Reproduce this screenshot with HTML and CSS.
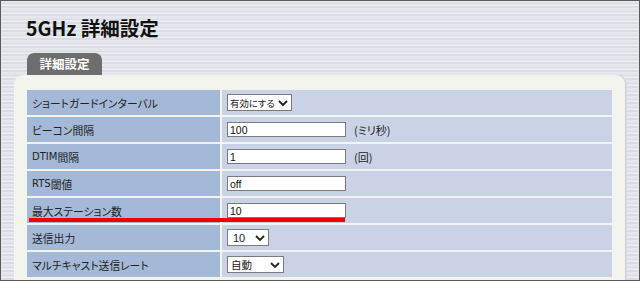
FILE: index.html
```html
<!DOCTYPE html>
<html lang="ja">
<head>
<meta charset="utf-8">
<title>5GHz 詳細設定</title>
<link rel="stylesheet" href="styles.css">
</head>
<body>
<div class="frame">
  <h1 class="title">5GHz 詳細設定</h1>
  <div class="tab">詳細設定</div>
  <div class="panel">
    <div class="settings">
      <div class="label">ショートガードインターバル</div>
      <div class="value">
        <span class="select select-wide"><span>有効にする</span><svg class="chev" viewBox="0 0 10 6" width="10" height="6"><path d="M1 1 L5 5 L9 1" fill="none" stroke="#222" stroke-width="1.8"/></svg></span>
      </div>
      <div class="label">ビーコン間隔</div>
      <div class="value"><input class="text" type="text" value="100"><span class="unit">(ミリ秒)</span></div>
      <div class="label"><span class="latin">DTIM</span>間隔</div>
      <div class="value"><input class="text" type="text" value="1"><span class="unit">(回)</span></div>
      <div class="label"><span class="latin">RTS</span>閾値</div>
      <div class="value"><input class="text" type="text" value="off"></div>
      <div class="label">最大ステーション数</div>
      <div class="value"><input class="text" type="text" value="10"></div>
      <div class="label">送信出力</div>
      <div class="value">
        <span class="select select-narrow"><span class="num">10</span><svg class="chev" viewBox="0 0 10 6" width="10" height="6"><path d="M1 1 L5 5 L9 1" fill="none" stroke="#222" stroke-width="1.8"/></svg></span>
      </div>
      <div class="label">マルチキャスト送信レート</div>
      <div class="value">
        <span class="select select-mid"><span>自動</span><svg class="chev" viewBox="0 0 10 6" width="10" height="6"><path d="M1 1 L5 5 L9 1" fill="none" stroke="#222" stroke-width="1.8"/></svg></span>
      </div>
    </div>
  </div>
  <div class="marker"></div>
</div>
</body>
</html>
```
FILE: styles.css
```css
html, body {
  margin: 0;
  padding: 0;
  background: #5a5a5a;
}

.frame {
  position: relative;
  width: 640px;
  height: 281px;
  box-sizing: border-box;
  border: 1px solid #5a5a5a;
  overflow: hidden;
  background-color: #dfe2e8;
  background-image: repeating-linear-gradient(180deg,
    #e3e6ec 0px, #e3e6ec 2px,
    #d6dae1 2px, #d6dae1 3px,
    #e9ebf0 3px, #e9ebf0 5px,
    #dadde4 5px, #dadde4 7px,
    #e6e8ed 7px, #e6e8ed 8px);
  font-family: "Noto Sans CJK JP", sans-serif;
  font-feature-settings: "palt";
  color: #222;
}

.title {
  margin: 0;
  height: 52px;
  box-sizing: border-box;
  padding: 16px 0 0 25px;
  font-size: 19.5px;
  line-height: 22px;
  font-weight: bold;
  color: #111;
  font-feature-settings: normal;
  white-space: nowrap;
}

.tab {
  margin-left: 26px;
  width: 75px;
  height: 22px;
  line-height: 22px;
  text-align: center;
  background: #6d6d6d;
  color: #fff;
  font-weight: bold;
  font-size: 12.5px;
  border-radius: 7px 7px 0 0;
  font-feature-settings: normal;
}

.panel {
  margin-left: 13px;
  width: 611px;
  height: 260px;
  box-sizing: border-box;
  padding: 15px 13px 0 13px;
  background: #f4f4ee;
  border-radius: 9px 9px 0 0;
  box-shadow: 1px 0 0 #cfd0d0, 2px 0 0 #dcdcdc;
}

.settings {
  display: grid;
  grid-template-columns: 193px 390px;
  grid-auto-rows: 25px;
  gap: 2px;
  background: #f3f4f4;
}

.label {
  display: flex;
  align-items: center;
  padding-left: 5px;
  background: #a4b9d7;
  font-size: 10.8px;
  white-space: nowrap;
}

.latin {
  font-family: "DejaVu Sans", sans-serif;
  font-size: 10px;
}

.value {
  display: flex;
  align-items: center;
  padding-left: 5px;
  background: #cad2e6;
}

.text {
  width: 119px;
  height: 15px;
  box-sizing: border-box;
  margin: 0;
  padding: 0 2px;
  border: 1px solid #7b7b7b;
  background: #fff;
  font-family: "Liberation Sans", Arial, sans-serif;
  font-size: 10.5px;
  color: #111;
  outline: none;
}

.unit {
  margin-left: 8px;
  font-size: 11px;
}

.select {
  display: inline-flex;
  align-items: center;
  justify-content: space-between;
  height: 17px;
  box-sizing: border-box;
  padding: 0 3px 0 2px;
  border: 1px solid #7b7b7b;
  background: #fff;
  font-size: 10.5px;
  white-space: nowrap;
}

.select-wide { width: 65px; font-size: 9.4px; }
.select-narrow { width: 42px; padding-left: 5px; }
.select-mid { width: 57px; padding-left: 3px; }

.num {
  font-family: "Liberation Sans", Arial, sans-serif;
  font-size: 11px;
}

.chev {
  display: block;
  flex: none;
  margin-left: 2px;
}

.marker {
  position: absolute;
  left: 28px;
  top: 217px;
  width: 316px;
  height: 4px;
  background: #f00000;
}
```
